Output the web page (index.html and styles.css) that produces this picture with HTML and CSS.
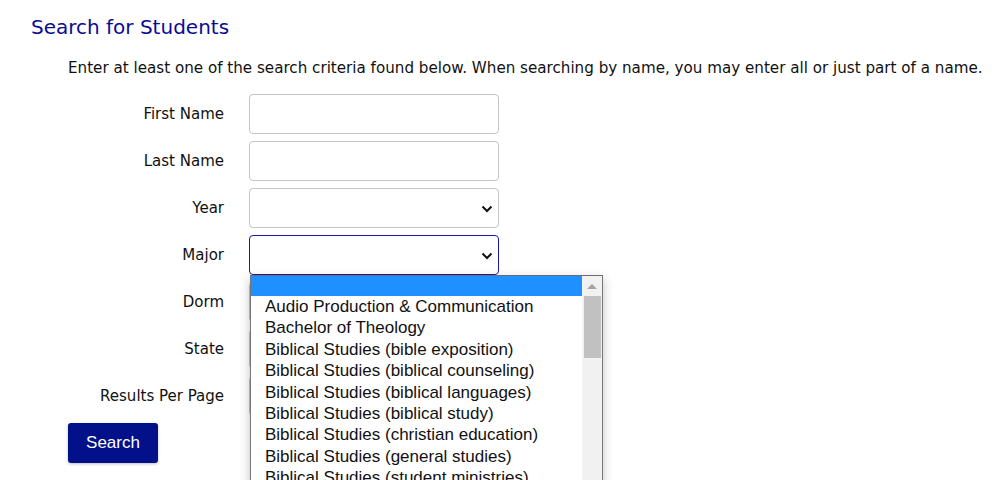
FILE: index.html
```html
<!DOCTYPE html>
<html lang="en">
<head>
<meta charset="utf-8">
<title>Search for Students</title>
<link rel="stylesheet" href="styles.css">
</head>
<body>
<main class="page">
  <h1 class="title">Search for Students</h1>
  <p class="intro">Enter at least one of the search criteria found below. When searching by name, you may enter all or just part of a name.</p>
  <form class="form">
    <label class="lbl">First Name</label>
    <div class="ctl"><input class="field" type="text"></div>
    <label class="lbl">Last Name</label>
    <div class="ctl"><input class="field" type="text"></div>
    <label class="lbl">Year</label>
    <div class="ctl"><div class="field sel"><svg class="chev" width="12" height="8" viewBox="0 0 12 8"><path d="M1.5 1.5 L6 6 L10.5 1.5" fill="none" stroke="#111" stroke-width="2"/></svg></div></div>
    <label class="lbl">Major</label>
    <div class="ctl major">
      <div class="field sel focus"><svg class="chev" width="12" height="8" viewBox="0 0 12 8"><path d="M1.5 1.5 L6 6 L10.5 1.5" fill="none" stroke="#111" stroke-width="2"/></svg></div>
      <div class="dropdown">
        <ul class="opts">
          <li class="opt selected">&nbsp;</li>
          <li class="opt">Audio Production &amp; Communication</li>
          <li class="opt">Bachelor of Theology</li>
          <li class="opt">Biblical Studies (bible exposition)</li>
          <li class="opt">Biblical Studies (biblical counseling)</li>
          <li class="opt">Biblical Studies (biblical languages)</li>
          <li class="opt">Biblical Studies (biblical study)</li>
          <li class="opt">Biblical Studies (christian education)</li>
          <li class="opt">Biblical Studies (general studies)</li>
          <li class="opt">Biblical Studies (student ministries)</li>
        </ul>
        <div class="scrollbar">
          <div class="arrow"></div>
          <div class="thumb"></div>
        </div>
      </div>
    </div>
    <label class="lbl">Dorm</label>
    <div class="ctl"><div class="field sel"></div></div>
    <label class="lbl">State</label>
    <div class="ctl"><div class="field sel"></div></div>
    <label class="lbl">Results Per Page</label>
    <div class="ctl"><div class="field sel"></div></div>
  </form>
  <button class="btn" type="button">Search</button>
</main>
</body>
</html>
```
FILE: styles.css
```css
* { box-sizing: border-box; }
html, body { margin: 0; padding: 0; background: #fff; }
body {
  font-family: "DejaVu Sans", Verdana, sans-serif;
  color: #111;
  overflow: hidden;
  height: 480px;
}
.page { padding: 14px 0 0 0; }
.title {
  margin: 0 0 0 31px;
  font-size: 20px;
  font-weight: normal;
  color: #0b0b94;
  line-height: 26px;
}
.intro {
  margin: 18px 0 0 68px;
  font-size: 15.15px;
  line-height: 20px;
  white-space: nowrap;
}
.form {
  margin-top: 16px;
  display: grid;
  grid-template-columns: 224px 250px;
  column-gap: 25px;
  row-gap: 7px;
  grid-auto-rows: 40px;
}
.lbl {
  font-size: 15px;
  text-align: right;
  align-self: center;
}
.ctl { position: relative; }
.field {
  display: block;
  width: 250px;
  height: 40px;
  border: 1px solid #c4c4c4;
  border-radius: 4px;
  background: #fff;
  padding: 0 10px;
  font: inherit;
}
.sel { position: relative; }
.chev { position: absolute; right: 5px; top: 16px; }
.focus { border-color: #1a1ab0; }
.dropdown {
  position: absolute;
  left: 1px;
  top: 40px;
  width: 353px;
  height: 260px;
  background: #fff;
  border: 1px solid #767676;
  border-top-color: #6e6e6e;
  box-shadow: 0 4px 10px rgba(0,0,0,0.25);
  display: flex;
  z-index: 5;
}
.opts {
  list-style: none;
  margin: 0;
  padding: 0;
  flex: 1;
  font-family: "Liberation Sans", Arial, sans-serif;
  font-size: 17px;
  color: #111;
}
.opt {
  height: 21.4px;
  line-height: 21.4px;
  padding-left: 14px;
  white-space: nowrap;
}
.opt.selected { background: #1e90ff; height: 20px; }
.scrollbar {
  width: 20px;
  background: #f1f1f1;
  display: flex;
  flex-direction: column;
  align-items: center;
}
.arrow {
  margin-top: 8px;
  width: 0; height: 0;
  border-left: 5px solid transparent;
  border-right: 5px solid transparent;
  border-bottom: 5px solid #a3a3a3;
}
.thumb {
  margin-top: 7px;
  width: 17px;
  height: 62px;
  background: #c1c1c1;
}
.btn {
  margin: 7px 0 0 68px;
  width: 90px;
  height: 40px;
  background: #02108a;
  color: #fff;
  border: none;
  border-radius: 3px;
  font-family: "Liberation Sans", Arial, sans-serif;
  font-size: 17px;
  box-shadow: 0 1px 3px rgba(0,0,0,0.25);
}
```
